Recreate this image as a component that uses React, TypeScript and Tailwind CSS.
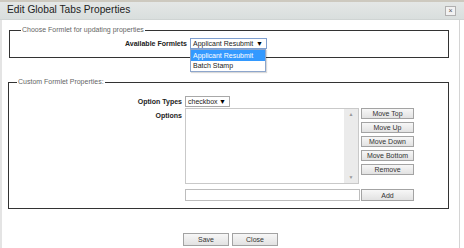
import React from "react";

function Btn({ label, w = "w-[53px]", h = "h-[11px]" }: { label: string; w?: string; h?: string }) {
  return (
    <div
      className={`${w} ${h} flex items-center justify-center border border-[#a3a3a3] bg-gradient-to-b from-[#f7f7f7] to-[#e2e2e2] text-[7px] leading-none text-[#333]`}
    >
      {label}
    </div>
  );
}

export default function App() {
  return (
    <div className="w-[464px] h-[248px] overflow-hidden bg-white flex flex-col font-['Liberation_Sans',Arial,sans-serif] text-[#222]">
      {/* Title bar */}
      <div className="h-[20px] shrink-0 border-t-2 border-[#cdc9bf] bg-gradient-to-b from-[#e4e7e6] to-[#d9dedd] border-b border-b-[#cfd4d3] flex items-center justify-between pl-[7px] pr-[8px]">
        <span className="text-[10.2px] leading-none text-[#222]">Edit Global Tabs Properties</span>
        <div className="w-[11px] h-[10px] border border-[#b0b0b0] bg-[#f2f2f2] flex items-center justify-center text-[7px] leading-none text-[#555]">
          ×
        </div>
      </div>

      {/* Body */}
      <div className="flex-1 flex pr-[4px]">
        <div className="flex-1 flex flex-col border-l-2 border-l-[#e4e4e4] border-r border-r-[#d4d4d4]">
          {/* Fieldset 1 */}
          <fieldset className="mt-[6px] ml-[7px] w-[440px] border border-[#333] pl-[11px] pb-[8px]">
            <legend className="px-[1px] text-[7px] leading-[8px] text-[#666]">
              Choose Formlet for updating properties
            </legend>
            <div className="mt-[4px] flex items-center">
              <div className="w-[166px] text-right text-[7px] font-bold leading-none">Available Formlets</div>
              <div className="relative ml-[3px]">
                <div className="w-[77px] h-[11px] border border-[#7f9fcf] bg-white flex items-center justify-between pl-[2px] pr-[3px] text-[7px] leading-none">
                  <span>Applicant Resubmit</span>
                  <span className="text-[7px] text-black">▼</span>
                </div>
                <div className="absolute left-0 top-full w-[76px] border border-[#8da6cc] bg-white shadow-[1px_1px_1px_rgba(0,0,0,0.15)] z-10">
                  <div className="h-[11px] bg-[#3399ff] text-white text-[7px] leading-[11px] pl-[2px]">Applicant Resubmit</div>
                  <div className="h-[10px] text-[7px] leading-[10px] pl-[2px]">Batch Stamp</div>
                </div>
              </div>
            </div>
          </fieldset>

          {/* Fieldset 2 */}
          <fieldset className="mt-[20px] ml-[6px] w-[441px] border border-[#333] pl-[8px] pb-[7px]">
            <legend className="px-[1px] text-[7px] leading-[8px] text-[#666]">Custom Formlet Properties:</legend>
            <div className="mt-[10px] flex items-center">
              <div className="w-[165px] text-right text-[7px] font-bold leading-none">Option Types</div>
              <div className="ml-[3px] w-[45px] h-[11px] border border-[#a8a8a8] bg-white flex items-center justify-between pl-[2px] pr-[3px] text-[7px] leading-none">
                <span>checkbox</span>
                <span className="text-[7px] text-black">▼</span>
              </div>
            </div>
            <div className="mt-[1px] flex">
              <div className="w-[165px] text-right text-[7px] font-bold leading-none pt-[4px]">Options</div>
              <div className="ml-[3px] w-[174px] h-[76px] border border-[#c9c9c9] bg-white flex justify-end">
                <div className="w-[14px] h-full bg-[#ebebeb] flex flex-col items-center justify-between py-[3px] text-[5px] leading-none text-[#999]">
                  <span>▲</span>
                  <span>▼</span>
                </div>
              </div>
              <div className="ml-[2px] flex flex-col gap-[3px]">
                <Btn label="Move Top" />
                <Btn label="Move Up" />
                <Btn label="Move Down" />
                <Btn label="Move Bottom" />
                <Btn label="Remove" />
              </div>
            </div>
            <div className="mt-[5px] flex">
              <div className="w-[165px]" />
              <div className="ml-[3px] w-[175px] h-[12px] border border-[#bdbdbd] bg-white" />
              <div className="ml-[1px]">
                <Btn label="Add" h="h-[12px]" />
              </div>
            </div>
          </fieldset>

          {/* Footer buttons */}
          <div className="mt-[24px] flex justify-center gap-[3px]">
            <Btn label="Save" w="w-[46px]" h="h-[13px]" />
            <Btn label="Close" w="w-[46px]" h="h-[13px]" />
          </div>
        </div>
      </div>
    </div>
  );
}
